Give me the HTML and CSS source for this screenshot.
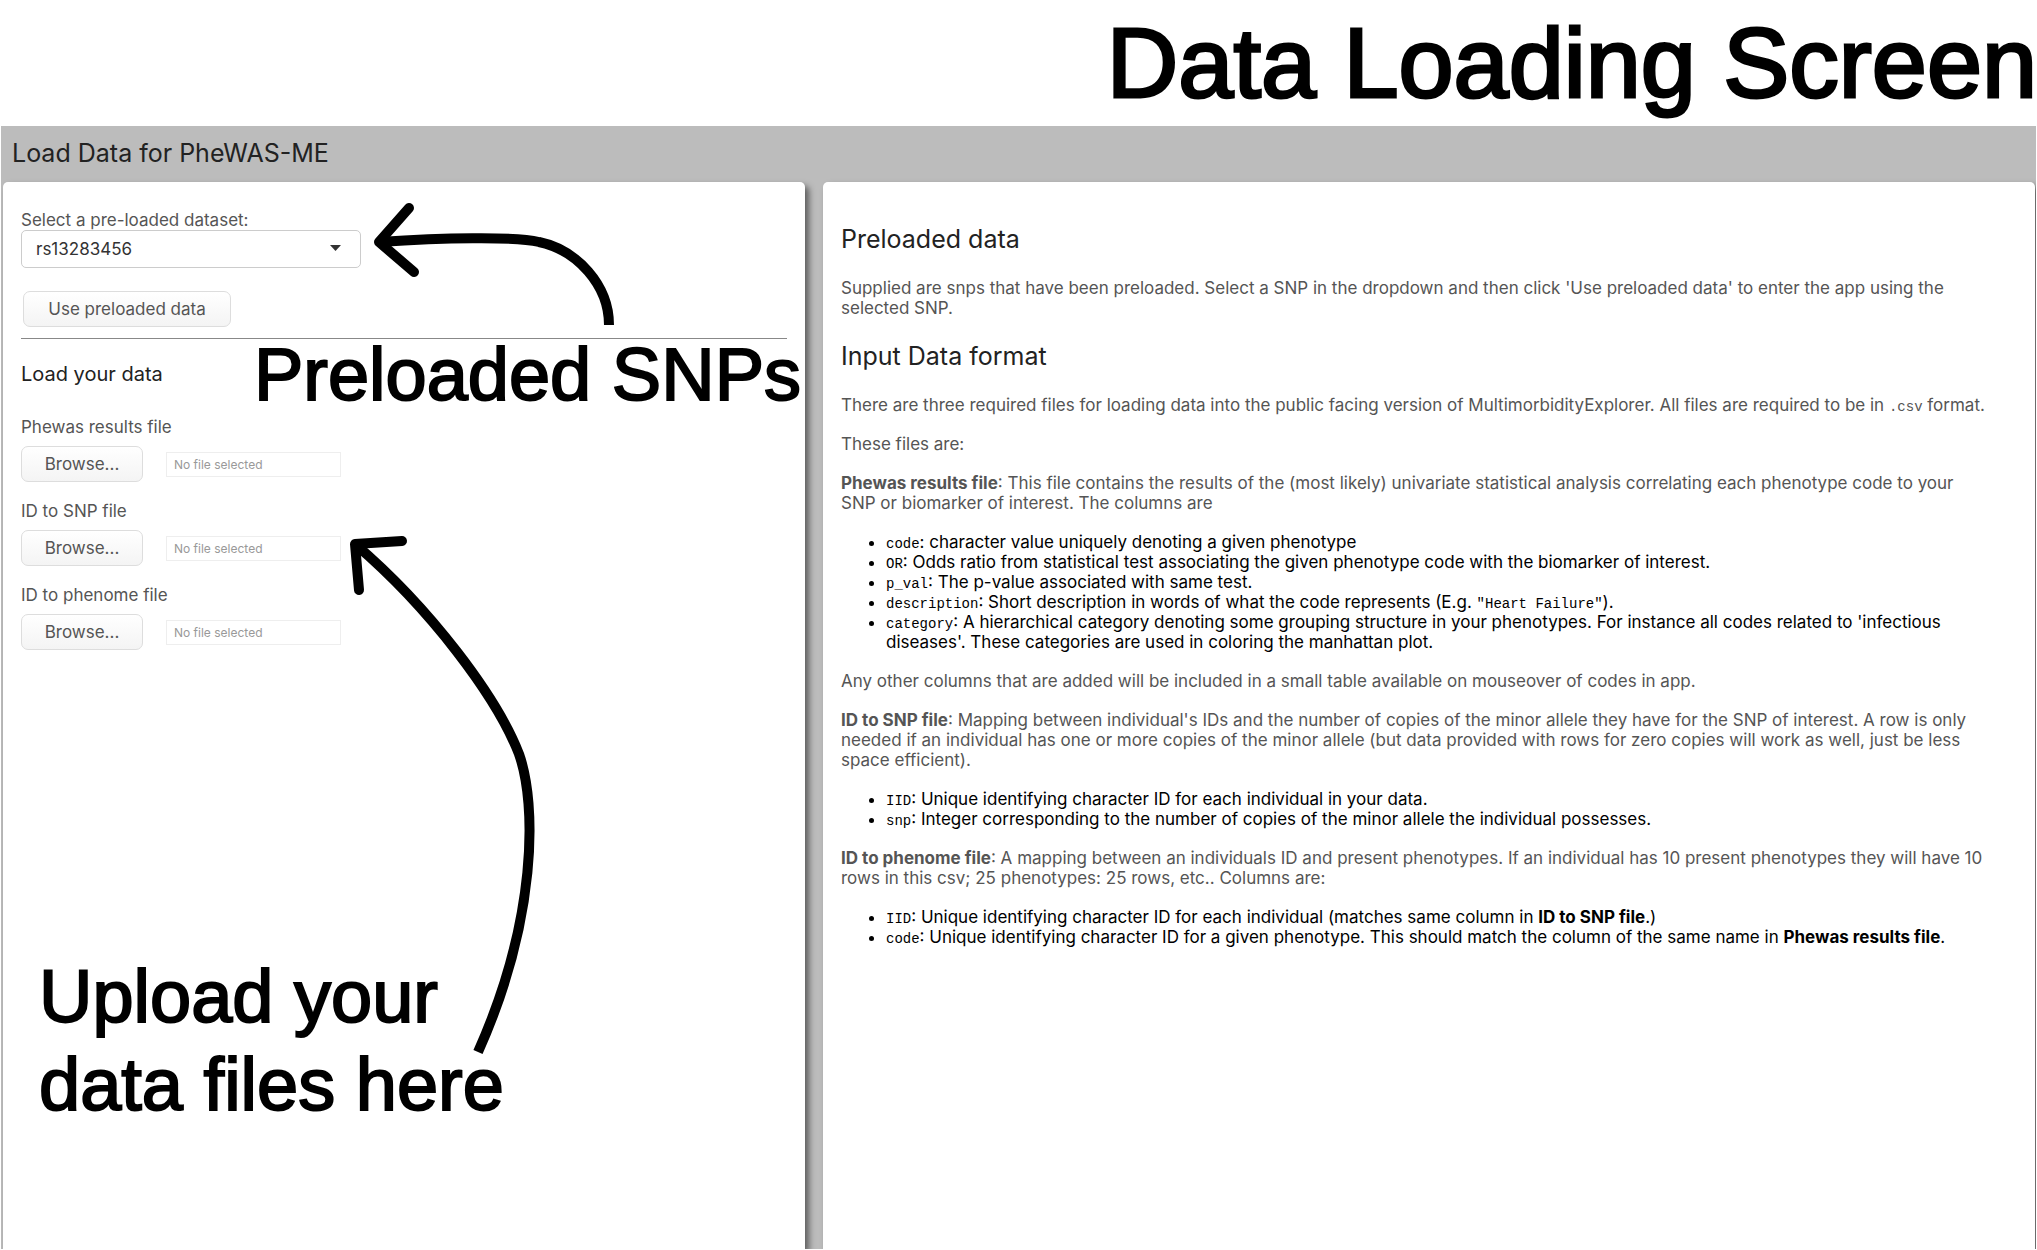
FILE: index.html
```html
<!DOCTYPE html>
<html lang="en">
<head>
<meta charset="utf-8">
<title>Load Data for PheWAS-ME</title>
<link rel="stylesheet" href="styles.css">
</head>
<body>
<h1 class="banner">Data Loading Screen</h1>
<div class="app">
  <header class="app-header"><h2 class="app-title">Load Data for PheWAS-ME</h2></header>
  <main class="panels">
    <section class="panel loader">
      <label class="field-label" for="dataset">Select a pre-loaded dataset:</label>
      <div class="select-wrap">
        <select class="select" id="dataset"><option>rs13283456</option></select>
        <svg class="caret" viewBox="0 0 11 6" aria-hidden="true"><path d="M0 0h11L5.500 6z"/></svg>
      </div>
      <button class="btn btn-use" type="button">Use preloaded data</button>
      <hr class="rule">
      <h3 class="sub-title">Load your data</h3>
      <div class="upload">
        <label class="field-label" for="phewas">Phewas results file</label>
        <div class="upload-row">
          <button class="btn btn-browse" type="button">Browse...</button>
          <input class="file-name" id="phewas" type="text" placeholder="No file selected" readonly>
        </div>
      </div>
      <div class="upload">
        <label class="field-label" for="snp">ID to SNP file</label>
        <div class="upload-row">
          <button class="btn btn-browse" type="button">Browse...</button>
          <input class="file-name" id="snp" type="text" placeholder="No file selected" readonly>
        </div>
      </div>
      <div class="upload">
        <label class="field-label" for="phenome">ID to phenome file</label>
        <div class="upload-row">
          <button class="btn btn-browse" type="button">Browse...</button>
          <input class="file-name" id="phenome" type="text" placeholder="No file selected" readonly>
        </div>
      </div>
      <svg class="arrows" width="802" height="1067" viewBox="3 182 802 1067" aria-hidden="true">
        <path d="M379 242C440 238 514 236 539 242C577 250 609 285 609 325"/>
        <path class="head" d="M409 208L379 242L414 272"/>
        <path d="M355 544C430 608 497 697 519 754C537 805 537 920 478 1052"/>
        <path class="head" d="M402 541L355 544L359 590"/>
      </svg>
      <p class="note note-preloaded">Preloaded SNPs</p>
      <p class="note note-upload">Upload your<br>data files here</p>
    </section>
    <section class="panel guide">
      <h3 class="guide-title">Preloaded data</h3>
      <p>Supplied are snps that have been preloaded. Select a SNP in the dropdown and then click 'Use preloaded data' to enter the app using the selected SNP.</p>
      <h3 class="guide-title">Input Data format</h3>
      <p>There are three required files for loading data into the public facing version of MultimorbidityExplorer. All files are required to be in <code>.csv</code> format.</p>
      <p>These files are:</p>
      <p><strong>Phewas results file</strong>: This file contains the results of the (most likely) univariate statistical analysis correlating each phenotype code to your SNP or biomarker of interest. The columns are</p>
      <ul>
        <li><code>code</code>: character value uniquely denoting a given phenotype</li>
        <li><code>OR</code>: Odds ratio from statistical test associating the given phenotype code with the biomarker of interest.</li>
        <li><code>p_val</code>: The p-value associated with same test.</li>
        <li><code>description</code>: Short description in words of what the code represents (E.g. <code>"Heart Failure"</code>).</li>
        <li><code>category</code>: A hierarchical category denoting some grouping structure in your phenotypes. For instance all codes related to 'infectious diseases'. These categories are used in coloring the manhattan plot.</li>
      </ul>
      <p>Any other columns that are added will be included in a small table available on mouseover of codes in app.</p>
      <p><strong>ID to SNP file</strong>: Mapping between individual's IDs and the number of copies of the minor allele they have for the SNP of interest. A row is only needed if an individual has one or more copies of the minor allele (but data provided with rows for zero copies will work as well, just be less space efficient).</p>
      <ul>
        <li><code>IID</code>: Unique identifying character ID for each individual in your data.</li>
        <li><code>snp</code>: Integer corresponding to the number of copies of the minor allele the individual possesses.</li>
      </ul>
      <p><strong>ID to phenome file</strong>: A mapping between an individuals ID and present phenotypes. If an individual has 10 present phenotypes they will have 10 rows in this csv; 25 phenotypes: 25 rows, etc.. Columns are:</p>
      <ul>
        <li><code>IID</code>: Unique identifying character ID for each individual (matches same column in <strong>ID to SNP file</strong>.)</li>
        <li><code>code</code>: Unique identifying character ID for a given phenotype. This should match the column of the same name in <strong>Phewas results file</strong>.</li>
      </ul>
    </section>
  </main>
</div>
</body>
</html>
```
FILE: styles.css
```css
* { box-sizing: border-box; }

body {
  margin: 0;
  min-height: 100vh;
  display: flex;
  flex-direction: column;
  background: #fff;
  color: #000;
  font-family: Inter, "Liberation Sans", sans-serif;
  font-size: 17px;
  line-height: 20px;
}

h1, h2, h3, p, ul { margin: 0; font-weight: 400; }

.banner {
  height: 126px;
  text-align: right;
  font-family: "Liberation Sans", Arial, sans-serif;
  font-size: 99px;
  line-height: 126px;
  white-space: nowrap;
  -webkit-text-stroke: 3px #000;
}

.app {
  flex: 1;
  display: flex;
  flex-direction: column;
  margin: 0 1px 1px;
  padding: 0 1px 0 2px;
  background: #bcbcbc;
  overflow: hidden;
}

.app-header { padding: 12px 9px 14px; }
.app-title { font-size: 25px; line-height: 30px; color: #222; }

.panels {
  flex: 1;
  display: grid;
  grid-template-columns: 802fr 1212fr;
  gap: 18px;
}

.panel {
  position: relative;
  padding: 28px 18px;
  background: #fff;
  border-radius: 5px 5px 0 0;
  box-shadow: 4px 4px 6px rgba(0, 0, 0, .5);
}

.field-label { display: block; color: #555; }

.select-wrap { position: relative; width: 340px; }
.select {
  display: block;
  width: 100%;
  height: 38px;
  padding: 0 14px;
  border: 1px solid #ccc;
  border-radius: 5px;
  background: #fff;
  color: #333;
  font: inherit;
  appearance: none;
}
.caret {
  position: absolute;
  right: 20px;
  top: 15px;
  width: 11px;
  height: 6px;
  fill: #333;
}

.btn {
  height: 36px;
  padding: 0;
  border: 1px solid #ddd;
  border-radius: 7px;
  background: linear-gradient(#fff, #f4f4f4);
  color: #555;
  font: inherit;
}
.btn-use { display: block; width: 208px; margin: 23px 0 0 2px; }
.btn-browse { width: 122px; }

.rule { margin: 11px 0 0; border: 0; border-top: 1px solid #888; }
.sub-title { margin: 25px 0 33px; font-size: 20px; color: #222; }

.upload { margin-bottom: 19px; }
.upload-row { display: flex; gap: 23px; align-items: center; margin-top: 9px; }
.file-name {
  width: 175px;
  height: 25px;
  padding: 0 7px;
  border: 1px solid #eee;
  font: 12px Inter, sans-serif;
}
.file-name::placeholder { color: #999; }

.arrows {
  position: absolute;
  left: 0;
  top: 0;
  fill: none;
  stroke: #000;
  stroke-width: 10;
  pointer-events: none;
}
.head { stroke-linecap: round; stroke-linejoin: round; }

.note {
  position: absolute;
  font-family: "Liberation Sans", Arial, sans-serif;
  font-size: 74px;
  line-height: 88px;
  white-space: nowrap;
  -webkit-text-stroke: 2px #000;
}
.note-preloaded { right: 4px; top: 149px; }
.note-upload { left: 36px; top: 771px; }

.guide { padding: 42px 43px 0 18px; color: #555; }
.guide p, .guide ul { margin-bottom: 19px; }
.guide-title { margin-bottom: 24px; font-size: 25px; line-height: 30px; color: #222; }
.guide p + .guide-title { margin-top: 23px; }
.guide ul { padding-left: 45px; color: #000; }
code { font-family: "Liberation Mono", monospace; font-size: 14px; line-height: 1; }
```
